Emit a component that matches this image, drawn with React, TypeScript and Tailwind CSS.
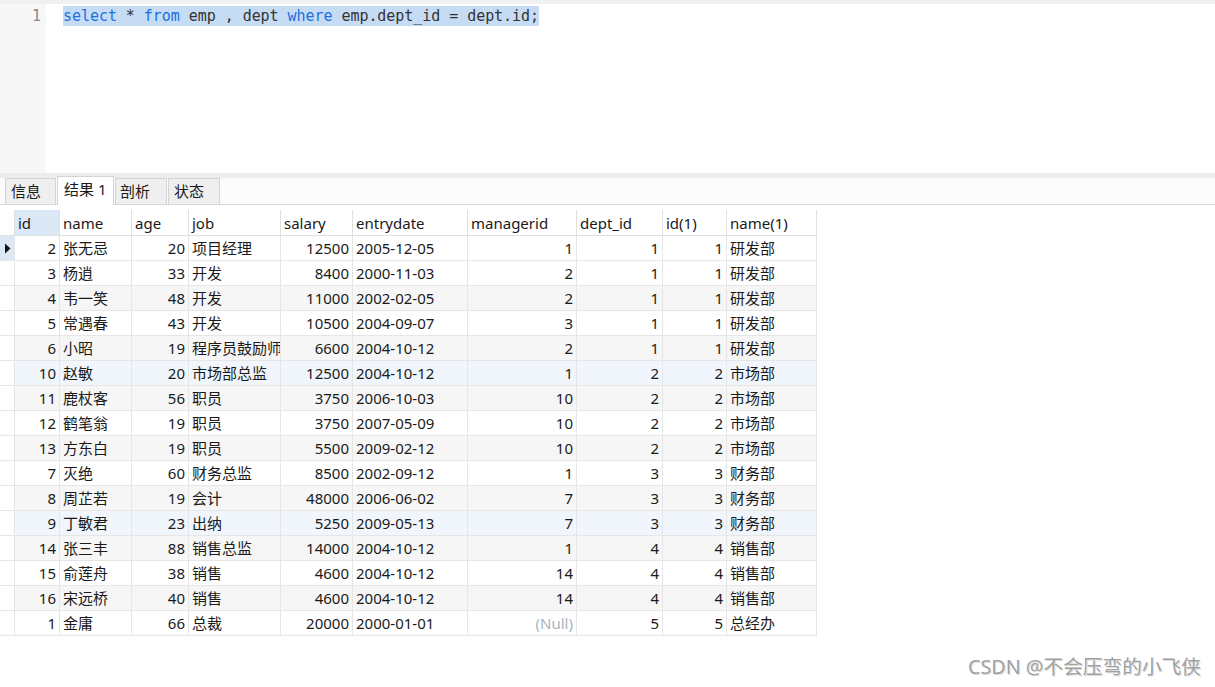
import React from "react";

type Row = [string, string, string, string, string, string, string | null, string, string, string];

const rows: Row[] = [
  ["2", "张无忌", "20", "项目经理", "12500", "2005-12-05", "1", "1", "1", "研发部"],
  ["3", "杨逍", "33", "开发", "8400", "2000-11-03", "2", "1", "1", "研发部"],
  ["4", "韦一笑", "48", "开发", "11000", "2002-02-05", "2", "1", "1", "研发部"],
  ["5", "常遇春", "43", "开发", "10500", "2004-09-07", "3", "1", "1", "研发部"],
  ["6", "小昭", "19", "程序员鼓励师", "6600", "2004-10-12", "2", "1", "1", "研发部"],
  ["10", "赵敏", "20", "市场部总监", "12500", "2004-10-12", "1", "2", "2", "市场部"],
  ["11", "鹿杖客", "56", "职员", "3750", "2006-10-03", "10", "2", "2", "市场部"],
  ["12", "鹤笔翁", "19", "职员", "3750", "2007-05-09", "10", "2", "2", "市场部"],
  ["13", "方东白", "19", "职员", "5500", "2009-02-12", "10", "2", "2", "市场部"],
  ["7", "灭绝", "60", "财务总监", "8500", "2002-09-12", "1", "3", "3", "财务部"],
  ["8", "周芷若", "19", "会计", "48000", "2006-06-02", "7", "3", "3", "财务部"],
  ["9", "丁敏君", "23", "出纳", "5250", "2009-05-13", "7", "3", "3", "财务部"],
  ["14", "张三丰", "88", "销售总监", "14000", "2004-10-12", "1", "4", "4", "销售部"],
  ["15", "俞莲舟", "38", "销售", "4600", "2004-10-12", "14", "4", "4", "销售部"],
  ["16", "宋远桥", "40", "销售", "4600", "2004-10-12", "14", "4", "4", "销售部"],
  ["1", "金庸", "66", "总裁", "20000", "2000-01-01", null, "5", "5", "总经办"],
];

const cols = [
  { name: "id", w: "w-[45px]", right: true },
  { name: "name", w: "w-[72px]", right: false },
  { name: "age", w: "w-[57px]", right: true },
  { name: "job", w: "w-[92px]", right: false },
  { name: "salary", w: "w-[72px]", right: true },
  { name: "entrydate", w: "w-[115px]", right: false },
  { name: "managerid", w: "w-[109px]", right: true },
  { name: "dept_id", w: "w-[86px]", right: true },
  { name: "id(1)", w: "w-[64px]", right: true },
  { name: "name(1)", w: "w-[90px]", right: false },
];

const uiFont = { fontFamily: '"Noto Sans", "Noto Sans CJK SC", sans-serif' };

export default function App() {
  return (
    <div
      className="w-[1215px] h-[687px] bg-white relative overflow-hidden text-[#1a1a1a]"
      style={uiFont}
    >
      {/* top strip */}
      <div className="h-[4px] bg-[#f0f0f0]" />
      {/* editor */}
      <div className="flex h-[169px]">
        <div className="w-[46px] bg-[#f7f7f7] text-right pr-[5px] pt-[2px] text-[15px] leading-[20px] text-[#8a8a8a]" style={{ fontFamily: '"DejaVu Sans Mono", monospace' }}>
          1
        </div>
        <div className="flex-1 pl-[17px] pt-[2px] text-[15px] leading-[20px]" style={{ fontFamily: '"DejaVu Sans Mono", monospace' }}>
          <span className="bg-[#c6dcf4] text-[#333333] whitespace-pre py-[1px] tracking-[-0.05px]">
            <span className="text-[#1d6fe0]">select</span> * <span className="text-[#1d6fe0]">from</span> emp , dept{" "}
            <span className="text-[#1d6fe0]">where</span> emp.dept_id = dept.id;
          </span>
        </div>
      </div>
      {/* separator */}
      <div className="h-[5px] bg-[#ececec]" />
      {/* tabs */}
      <div className="h-[27px] flex items-end pl-[5px] gap-[1px] border-b border-[#d6d6d6] bg-[#fbfbfb]">
        <div className="w-[51px] h-[26px] bg-[#efefef] border border-b-0 border-[#d4d4d4] pl-[5px] text-[15px] leading-[24px]">信息</div>
        <div className="w-[57px] h-[29px] -mb-[1px] bg-white border border-b-0 border-[#d4d4d4] pl-[6px] text-[15px] leading-[24px]">结果 1</div>
        <div className="w-[52px] h-[26px] bg-[#efefef] border border-b-0 border-[#d4d4d4] pl-[4px] text-[15px] leading-[24px]">剖析</div>
        <div className="w-[52px] h-[26px] bg-[#efefef] border border-b-0 border-[#d4d4d4] pl-[5px] text-[15px] leading-[24px]">状态</div>
      </div>
      {/* grid */}
      <div className="pt-[5px]">
        {/* header */}
        <div className="flex h-[26px] text-[15px] leading-[26px]">
          <div className="w-[15px] border-r border-b border-[#e0e0e0]" />
          {cols.map((c, i) => (
            <div
              key={c.name}
              className={`${c.w} border-r border-b border-[#e0e0e0] pl-[3px] whitespace-nowrap overflow-hidden ${i === 0 ? "bg-[#dbe8f6]" : "bg-white"}`}
            >
              {c.name}
            </div>
          ))}
        </div>
        {rows.map((r, ri) => {
          const blue = ri === 5 || ri === 11;
          const gray = ri % 2 === 0 && ri !== 0;
          const bg = blue ? "bg-[#f0f6fc]" : gray ? "bg-[#f6f6f6]" : "bg-white";
          return (
            <div key={ri} className="flex h-[25px] text-[15px] leading-[24px]">
              <div className={`w-[15px] border-r border-b border-[#e6e6e6] flex items-center justify-center ${ri === 0 ? "bg-[#dbe8f6]" : "bg-white"}`}>
                {ri === 0 && (
                  <svg width="7" height="11" viewBox="0 0 7 11">
                    <path d="M1 0.5 L6.5 5.5 L1 10.5 Z" fill="#111" />
                  </svg>
                )}
              </div>
              {cols.map((c, ci) => {
                const v = r[ci];
                return (
                  <div
                    key={ci}
                    className={`${c.w} ${bg} border-r border-b border-[#e6e6e6] whitespace-nowrap overflow-hidden ${c.right ? "text-right pr-[3px]" : "pl-[3px]"}`}
                  >
                    {v === null ? <span className="text-[#a9b4c2]">(Null)</span> : v}
                  </div>
                );
              })}
            </div>
          );
        })}
      </div>
      {/* watermark */}
      <div
        className="absolute right-[14px] bottom-[7px] text-[19.7px] leading-[26px] text-[#a0a0a0]"
        style={{ ...uiFont, textShadow: "0 0 1px #ffffff, 1px 1px 0 #dadada" }}
      >
        CSDN @不会压弯的小飞侠
      </div>
    </div>
  );
}
